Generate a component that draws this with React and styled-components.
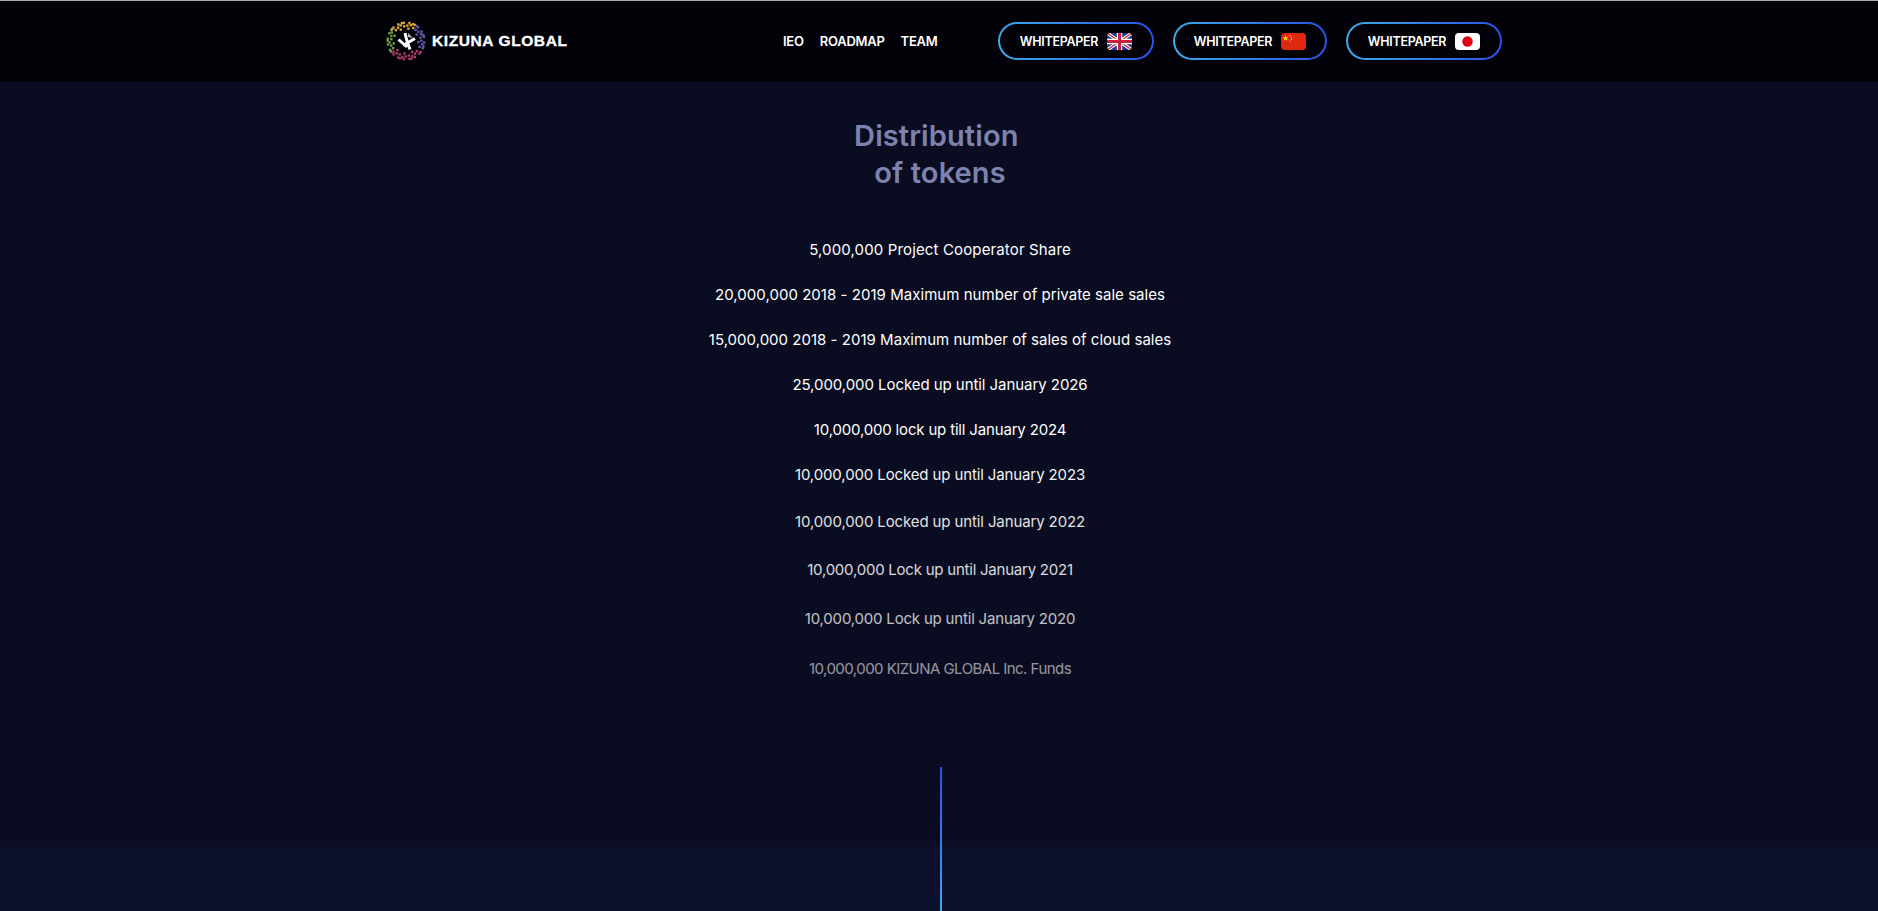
import React from 'react'
import styled, { createGlobalStyle } from 'styled-components'

const GlobalStyle = createGlobalStyle`
    html, body {
        margin: 0;
        background: #0a0c21;
        font-family: Inter, "Noto Sans", sans-serif;
    }
    #root {
        height: 911px;
        overflow: hidden;
    }
`

const Page = styled.div`
    position: relative;
    height: 911px;
    overflow: hidden;
    display: flex;
    flex-direction: column;
`

const Header = styled.header`
    box-sizing: border-box;
    height: 82px;
    flex: none;
    background: #020208;
    border-top: 1px solid #a9a9a9;
    display: flex;
    align-items: center;
    padding: 0 0 1px 386px;
`

const Logo = styled.div`
    display: flex;
    align-items: center;
    gap: 6px;
    width: 397px;
    flex: none;
`

const LogoText = styled.span`
    font-family: "Liberation Sans", Arial, sans-serif;
    font-weight: 700;
    font-size: 15.5px;
    letter-spacing: 0.6px;
    -webkit-text-stroke: 0.35px #fff;
    color: #fff;
    white-space: nowrap;
`

const Nav = styled.nav`
    display: flex;
    gap: 16px;
    width: 215px;
    flex: none;
`

const NavLink = styled.a`
    font-size: 13px;
    font-weight: 600;
    color: #fff;
    letter-spacing: -0.25px;
`

const Papers = styled.div`
    display: flex;
    gap: 19px;
`

const PaperButton = styled.a`
    box-sizing: border-box;
    width: ${(p) => p.$width}px;
    height: 38px;
    border: 2px solid transparent;
    border-radius: 19px;
    background:
        linear-gradient(#020208, #020208) padding-box,
        linear-gradient(90deg, #3cabea, #2a52e6) border-box;
    display: flex;
    align-items: center;
    justify-content: center;
    gap: 9px;
    font-size: 12.5px;
    font-weight: 600;
    color: #fff;
    letter-spacing: -0.3px;
`

const Flag = styled.svg`
    width: 25px;
    height: 17px;
    border-radius: 4px;
    display: block;
`

const Main = styled.main`
    height: 765px;
    flex: none;
    box-sizing: border-box;
    padding: 35px 0 0 2px;
    display: flex;
    flex-direction: column;
    align-items: center;
    background: #0a0c21;
`

const Title = styled.h2`
    margin: 0 0 47px;
    font-size: 29px;
    line-height: 37px;
    font-weight: 600;
    letter-spacing: 0.1px;
    color: #7d83ac;
    text-align: center;
`

const Row = styled.p`
    margin: ${(p) => p.$top}px 0 0;
    font-size: 15px;
    line-height: 24px;
    letter-spacing: ${(p) => p.$track}px;
    color: #fff;
    opacity: ${(p) => p.$fade};
    text-align: center;
    white-space: nowrap;
`

const Band = styled.div`
    flex: 1;
    background: #0e112d;
`

const Line = styled.div`
    position: absolute;
    left: 940px;
    top: 767px;
    bottom: 0;
    width: 2px;
    background: linear-gradient(#2d4fe8, #3aa9f0);
`

const rows = [
    { text: '5,000,000 Project Cooperator Share', top: 0, fade: 1, track: 0.14 },
    { text: '20,000,000 2018 - 2019 Maximum number of private sale sales', top: 21, fade: 1, track: 0.04 },
    { text: '15,000,000 2018 - 2019 Maximum number of sales of cloud sales', top: 21, fade: 1, track: 0.02 },
    { text: '25,000,000 Locked up until January 2026', top: 21, fade: 1, track: -0.06 },
    { text: '10,000,000 lock up till January 2024', top: 21, fade: 1, track: -0.17 },
    { text: '10,000,000 Locked up until January 2023', top: 21, fade: 0.95, track: -0.12 },
    { text: '10,000,000 Locked up until January 2022', top: 23, fade: 0.88, track: -0.12 },
    { text: '10,000,000 Lock up until January 2021', top: 24, fade: 0.84, track: -0.23 },
    { text: '10,000,000 Lock up until January 2020', top: 25, fade: 0.74, track: -0.19 },
    { text: '10,000,000 KIZUNA GLOBAL Inc. Funds', top: 26, fade: 0.56, track: -0.54 },
]

// ring of the logo: start angle, end angle, colour
const arcs = [
    { from: 232, to: 308, color: '#6f9a45' },
    { from: 308, to: 392, color: '#d9a63c' },
    { from: 392, to: 484, color: '#5d5aa6' },
    { from: 484, to: 592, color: '#b23a6a' },
]

// which radii get a dot, repeated along the arc
const ringPattern = [[18.3], [18.3, 14.8], [], [15.5], [18.3, 12.5], [16.5]]

function LogoMark() {
    const dots = []
    arcs.forEach((arc) => {
        let i = 0
        for (let a = arc.from + 3; a < arc.to; a += 6) {
            const rad = ((a - 90) * Math.PI) / 180
            ringPattern[i % ringPattern.length].forEach((r) => {
                dots.push(
                    <rect
                        key={`${a}-${r}`}
                        x={20 + Math.cos(rad) * r - 1.2}
                        y={20 + Math.sin(rad) * r - 1.2}
                        width="2.4"
                        height="2.4"
                        fill={arc.color}
                    />
                )
            })
            i++
        }
    })
    return (
        <svg width="40" height="40" viewBox="0 0 40 40">
            {dots}
            <path d="M12.5 18.5 L21 26 M29 17.5 L17 24.5 M19 12 L21 20 L24 28.5" stroke="#fff" strokeWidth="3" fill="none" />
            <path d="M22 12 L27 17 L22 16 Z" fill="#bcbcc6" />
        </svg>
    )
}

function UkFlag() {
    return (
        <Flag viewBox="0 0 25 17">
            <rect width="25" height="17" fill="#1f3a8a" />
            <path d="M0 0 L25 17 M25 0 L0 17" stroke="#fff" strokeWidth="3.4" />
            <path d="M0 0 L25 17 M25 0 L0 17" stroke="#c8203c" strokeWidth="1.2" />
            <path d="M12.5 0 V17 M0 8.5 H25" stroke="#fff" strokeWidth="5.4" />
            <path d="M12.5 0 V17 M0 8.5 H25" stroke="#c8203c" strokeWidth="3" />
        </Flag>
    )
}

function CnFlag() {
    return (
        <Flag viewBox="0 0 25 17">
            <rect width="25" height="17" fill="#de2910" />
            <path d="M4.5 2.2 L5.3 4.3 L7.4 4.3 L5.7 5.6 L6.4 7.7 L4.5 6.4 L2.6 7.7 L3.3 5.6 L1.6 4.3 L3.7 4.3 Z" fill="#ffde00" />
            <circle cx="9" cy="2.4" r="0.6" fill="#ffde00" />
            <circle cx="10.4" cy="4.2" r="0.6" fill="#ffde00" />
            <circle cx="10.4" cy="6.4" r="0.6" fill="#ffde00" />
            <circle cx="9" cy="8" r="0.6" fill="#ffde00" />
        </Flag>
    )
}

function JpFlag() {
    return (
        <Flag viewBox="0 0 25 17">
            <rect width="25" height="17" fill="#fff" />
            <circle cx="12.5" cy="8.5" r="5.2" fill="#e00012" />
        </Flag>
    )
}

export default function App() {
    return (
        <Page>
            <GlobalStyle />
            <Header>
                <Logo>
                    <LogoMark />
                    <LogoText>KIZUNA GLOBAL</LogoText>
                </Logo>
                <Nav>
                    <NavLink>IEO</NavLink>
                    <NavLink>ROADMAP</NavLink>
                    <NavLink>TEAM</NavLink>
                </Nav>
                <Papers>
                    <PaperButton $width={156}>WHITEPAPER <UkFlag /></PaperButton>
                    <PaperButton $width={154}>WHITEPAPER <CnFlag /></PaperButton>
                    <PaperButton $width={156}>WHITEPAPER <JpFlag /></PaperButton>
                </Papers>
            </Header>
            <Main>
                <Title>Distribution&nbsp;<br />of tokens</Title>
                {rows.map((row) => (
                    <Row key={row.text} $top={row.top} $fade={row.fade} $track={row.track}>{row.text}</Row>
                ))}
            </Main>
            <Band />
            <Line />
        </Page>
    )
}
